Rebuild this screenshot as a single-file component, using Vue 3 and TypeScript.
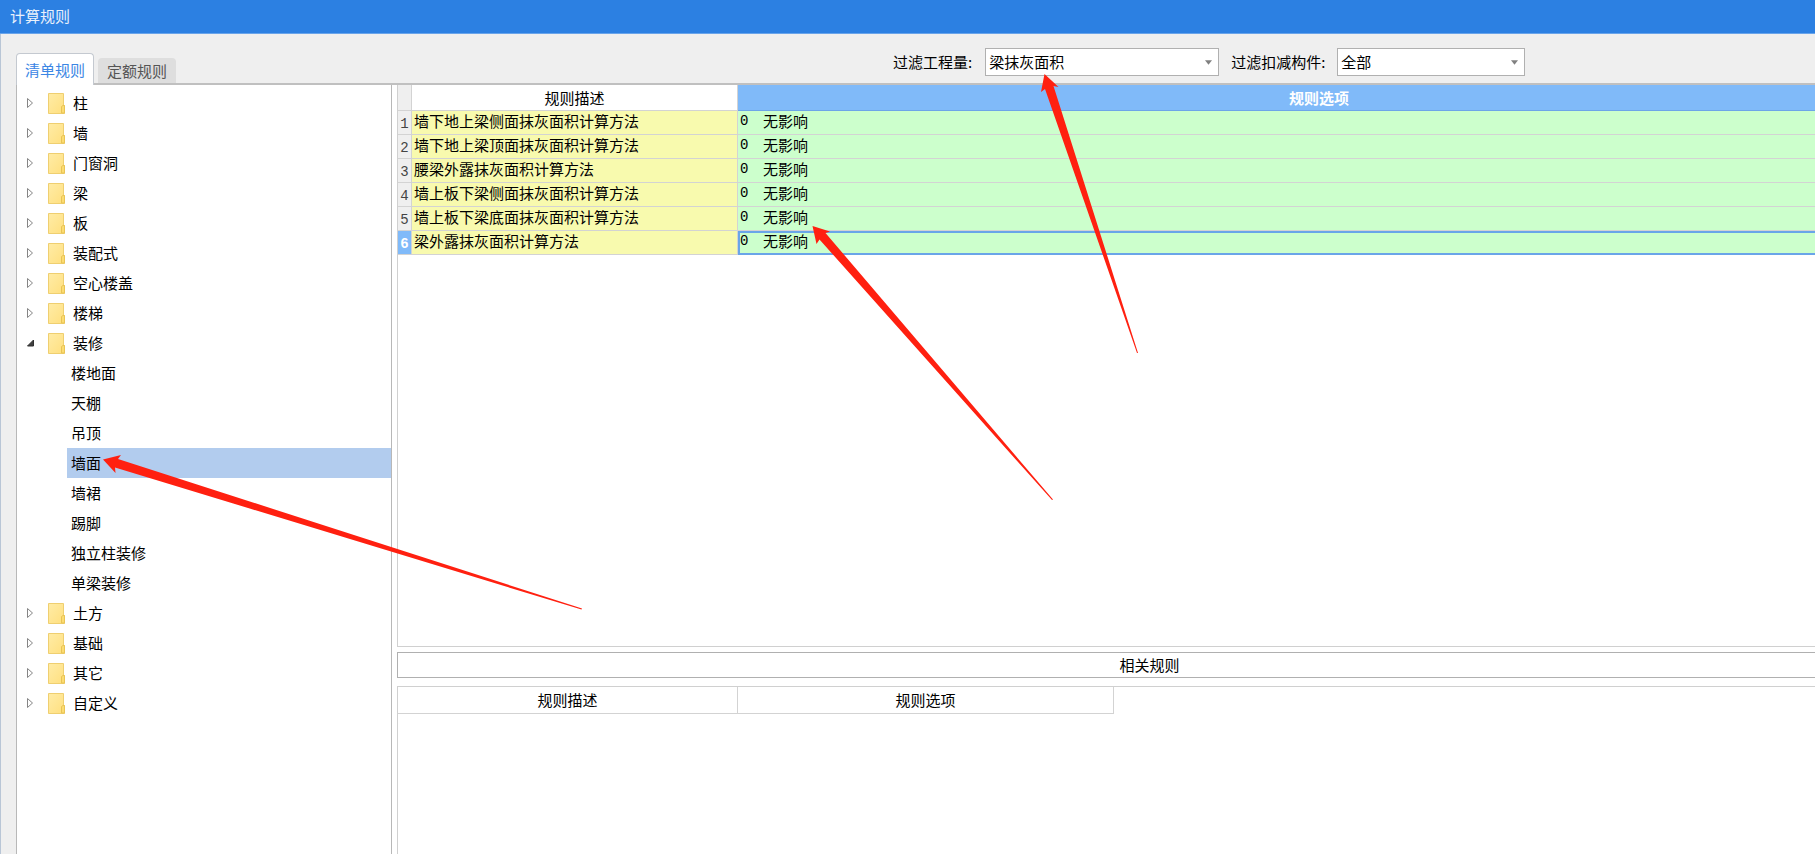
<script setup lang="ts">
import { ref } from 'vue'

interface TreeNode {
  name: string
  children?: string[]
}

const tabs = ['清单规则', '定额规则']
const activeTab = ref('清单规则')

const nodes: TreeNode[] = [
  { name: '柱' },
  { name: '墙' },
  { name: '门窗洞' },
  { name: '梁' },
  { name: '板' },
  { name: '装配式' },
  { name: '空心楼盖' },
  { name: '楼梯' },
  {
    name: '装修',
    children: ['楼地面', '天棚', '吊顶', '墙面', '墙裙', '踢脚', '独立柱装修', '单梁装修'],
  },
  { name: '土方' },
  { name: '基础' },
  { name: '其它' },
  { name: '自定义' },
]
const selected = ref('墙面')

const rules = [
  '墙下地上梁侧面抹灰面积计算方法',
  '墙下地上梁顶面抹灰面积计算方法',
  '腰梁外露抹灰面积计算方法',
  '墙上板下梁侧面抹灰面积计算方法',
  '墙上板下梁底面抹灰面积计算方法',
  '梁外露抹灰面积计算方法',
]
const currentRule = ref(5)
const quantity = ref('梁抹灰面积')
const component = ref('全部')
</script>

<template>
  <div class="window">
    <header class="titlebar">计算规则</header>
    <main class="body">
      <div class="toolbar">
        <div class="tabs" role="tablist">
          <button
            v-for="tab in tabs"
            :key="tab"
            type="button"
            role="tab"
            class="tab"
            :class="{ active: tab === activeTab }"
            :aria-selected="tab === activeTab"
            @click="activeTab = tab"
          >{{ tab }}</button>
        </div>
        <div class="filters">
          <label for="quantity">过滤工程量:</label>
          <span class="combo wide">
            <select id="quantity" v-model="quantity"><option>梁抹灰面积</option></select>
            <svg class="caret" viewBox="0 0 8 5" aria-hidden="true"><path d="M0 0H8L4 5Z" /></svg>
          </span>
          <label for="component">过滤扣减构件:</label>
          <span class="combo">
            <select id="component" v-model="component"><option>全部</option></select>
            <svg class="caret" viewBox="0 0 8 5" aria-hidden="true"><path d="M0 0H8L4 5Z" /></svg>
          </span>
        </div>
      </div>

      <div class="panes">
        <nav class="tree">
          <ul>
            <li v-for="node in nodes" :key="node.name">
              <button type="button" class="node">
                <svg class="toggle" viewBox="0 0 9 12" aria-hidden="true">
                  <path v-if="node.children" d="M7.500 3V9H1.500Z" fill="#404040" stroke="#303030" />
                  <path v-else d="M1.500 1.500L6.500 6L1.500 10.500Z" fill="#fff" stroke="#858585" />
                </svg>
                <svg class="folder" viewBox="0 0 17 21" aria-hidden="true">
                  <defs>
                    <linearGradient id="folderFill" x1="0" y1="0" x2="1" y2="1">
                      <stop offset="0" stop-color="#ffeca6" />
                      <stop offset="1" stop-color="#ffdf7e" />
                    </linearGradient>
                  </defs>
                  <path d="M.500 .500H15.500V12.500H16.500V20.500H.500Z" fill="url(#folderFill)" stroke="#efcf70" />
                  <path d="M13.500 20V13.500L15 12.500H16.500V20Z" fill="#fbdc72" stroke="#e9c455" />
                </svg>
                <span>{{ node.name }}</span>
              </button>
              <ul v-if="node.children">
                <li v-for="child in node.children" :key="child">
                  <button
                    type="button"
                    class="leaf"
                    :class="{ selected: child === selected }"
                    @click="selected = child"
                  >{{ child }}</button>
                </li>
              </ul>
            </li>
          </ul>
        </nav>

        <section class="content">
          <div class="rules">
            <table class="grid">
              <thead>
                <tr>
                  <th class="index"></th>
                  <th class="desc">规则描述</th>
                  <th class="option current">规则选项</th>
                </tr>
              </thead>
              <tbody>
                <tr
                  v-for="(rule, i) in rules"
                  :key="rule"
                  :class="{ chosen: i === currentRule }"
                  @click="currentRule = i"
                >
                  <th class="index" scope="row">{{ i + 1 }}</th>
                  <td class="desc">{{ rule }}</td>
                  <td class="option"><span class="code">0</span>无影响</td>
                </tr>
              </tbody>
            </table>
          </div>
          <h2 class="caption">相关规则</h2>
          <div class="related">
            <table class="related-grid">
              <thead>
                <tr>
                  <th class="related-desc">规则描述</th>
                  <th class="related-option">规则选项</th>
                </tr>
              </thead>
            </table>
          </div>
        </section>
      </div>
    </main>

    <svg class="arrows" width="1815" height="854" aria-hidden="true">
      <path d="M1044.500 74L1058.500 87L1053.500 86L1138 353L1137 353L1045 89L1041 92Z" />
      <path d="M812.500 226L830 231.500L825.500 233L1053 499.500L1052 500L819.500 239.500L816.500 244Z" />
      <path d="M103 459.500L121 455L118 459L582 608.500L581.500 609.500L115 467.500L115.500 473Z" />
    </svg>
  </div>
</template>

<style>
body {
  margin: 0;
}
</style>

<style scoped>
.window {
  position: relative;
  display: flex;
  flex-direction: column;
  height: 100vh;
  overflow: hidden;
  background: #efefef;
  color: #000;
  font: 15px/20px "Noto Sans CJK SC", sans-serif;
}
.window * {
  box-sizing: border-box;
}
button,
select {
  margin: 0;
  font: inherit;
  color: inherit;
}
.titlebar {
  flex: none;
  height: 34px;
  padding: 6px 10px;
  border-bottom: 1px solid #69a4ea;
  background: #2c80e2;
  color: #e9f1fc;
}
.body {
  flex: 1;
  min-height: 0;
  display: flex;
  flex-direction: column;
  padding-left: 15px;
  border-left: 1px solid #b9c6d6;
}
.toolbar {
  display: flex;
  flex: none;
  height: 49px;
}
.tabs {
  display: flex;
  flex: none;
  align-items: flex-end;
  gap: 4px;
  width: 877px;
}
.tab {
  width: 78px;
  height: 25px;
  padding: 0;
  border: 0;
  border-radius: 4px 4px 0 0;
  background: #dedede;
  color: #555;
}
.tab.active {
  position: relative;
  height: 32px;
  margin-bottom: -2px;
  border: 1px solid #c4c9d0;
  border-bottom: 0;
  background: #fff;
  color: #3b86e4;
}
.filters {
  display: flex;
  align-items: center;
  height: 28px;
  margin-top: 14px;
}
.combo {
  position: relative;
  width: 188px;
  height: 28px;
  margin-left: 12px;
}
.combo.wide {
  width: 234px;
  margin: 0 12px 0 13px;
}
.combo select {
  display: block;
  width: 100%;
  height: 28px;
  padding: 0 24px 0 3px;
  border: 1px solid #b0b0b0;
  border-radius: 0;
  background: #fff;
  appearance: none;
}
.caret {
  position: absolute;
  top: 12px;
  right: 7px;
  width: 7px;
  height: 5px;
  fill: #808080;
  pointer-events: none;
}
.panes {
  flex: 1;
  min-height: 0;
  display: flex;
  gap: 5px;
  border-top: 2px solid #c0c0c0;
  background: #fff;
  margin-right: -87px;
}
.tree {
  flex: none;
  width: 376px;
  padding-top: 3px;
  border: 1px solid #b8b8b8;
  border-width: 0 1px 0 1px;
}
.tree ul {
  margin: 0;
  padding: 0;
  list-style: none;
}
.node {
  display: flex;
  align-items: center;
  width: 100%;
  height: 30px;
  padding: 0 0 0 9px;
  border: 0;
  background: none;
}
.toggle {
  width: 9px;
  height: 12px;
}
.folder {
  width: 17px;
  height: 21px;
  margin: 0 8px 0 13px;
}
.leaf {
  display: block;
  width: calc(100% - 50px);
  height: 30px;
  margin-left: 50px;
  padding: 0 4px;
  border: 0;
  background: none;
  text-align: left;
}
.leaf.selected {
  background: #b2ccee;
}
.content {
  flex: 1;
  min-width: 0;
  display: flex;
  flex-direction: column;
}
.rules {
  flex: none;
  height: 562px;
  border: 1px solid #d0d0d0;
  border-top: 0;
}
table {
  border-spacing: 0;
  table-layout: fixed;
}
th,
td {
  padding: 0;
  border: 0 solid #d3d3d3;
  border-width: 0 1px 1px 0;
  font-weight: 400;
  white-space: nowrap;
}
.grid {
  width: 100%;
}
.grid thead th {
  height: 26px;
}
.grid tbody th,
.grid tbody td {
  height: 24px;
  padding: 0 0 4px;
  line-height: 18px;
}
.grid .index {
  width: 14px;
  background: #efefef;
  color: #444;
}
.grid tbody .index {
  padding: 2px 0 0;
  font: 14px/18px "Liberation Mono", monospace;
}
.grid .desc {
  width: 326px;
}
.grid tbody .desc {
  padding-left: 2px;
  background: #f8faae;
}
.grid thead .current {
  border-color: #6da5e8;
  background: #80baf9;
  color: #fff;
  font-weight: 700;
}
.grid tbody .option {
  padding-left: 2px;
  background: #ccffcc;
}
.grid tbody .chosen .index {
  background: #80baf9;
  color: #fff;
  font-weight: 700;
}
.grid .chosen .option {
  outline: 2px solid #6aa5e8;
  outline-offset: -2px;
}
.code {
  display: inline-block;
  width: 23px;
  font: 14px/18px "Liberation Mono", monospace;
  vertical-align: top;
}
.caption {
  flex: none;
  height: 26px;
  margin: 5px 0 8px;
  border: 1px solid #b0b0b0;
  font-size: 15px;
  font-weight: 400;
  line-height: 23px;
  text-align: center;
}
.related {
  flex: 1;
  border: 1px solid #d0d0d0;
  border-bottom: 0;
}
.related-grid {
  width: 716px;
}
.related-grid th {
  height: 27px;
}
.related-desc {
  width: 340px;
}
.arrows {
  position: absolute;
  top: 0;
  left: 0;
  fill: #ff2010;
  pointer-events: none;
}
</style>
